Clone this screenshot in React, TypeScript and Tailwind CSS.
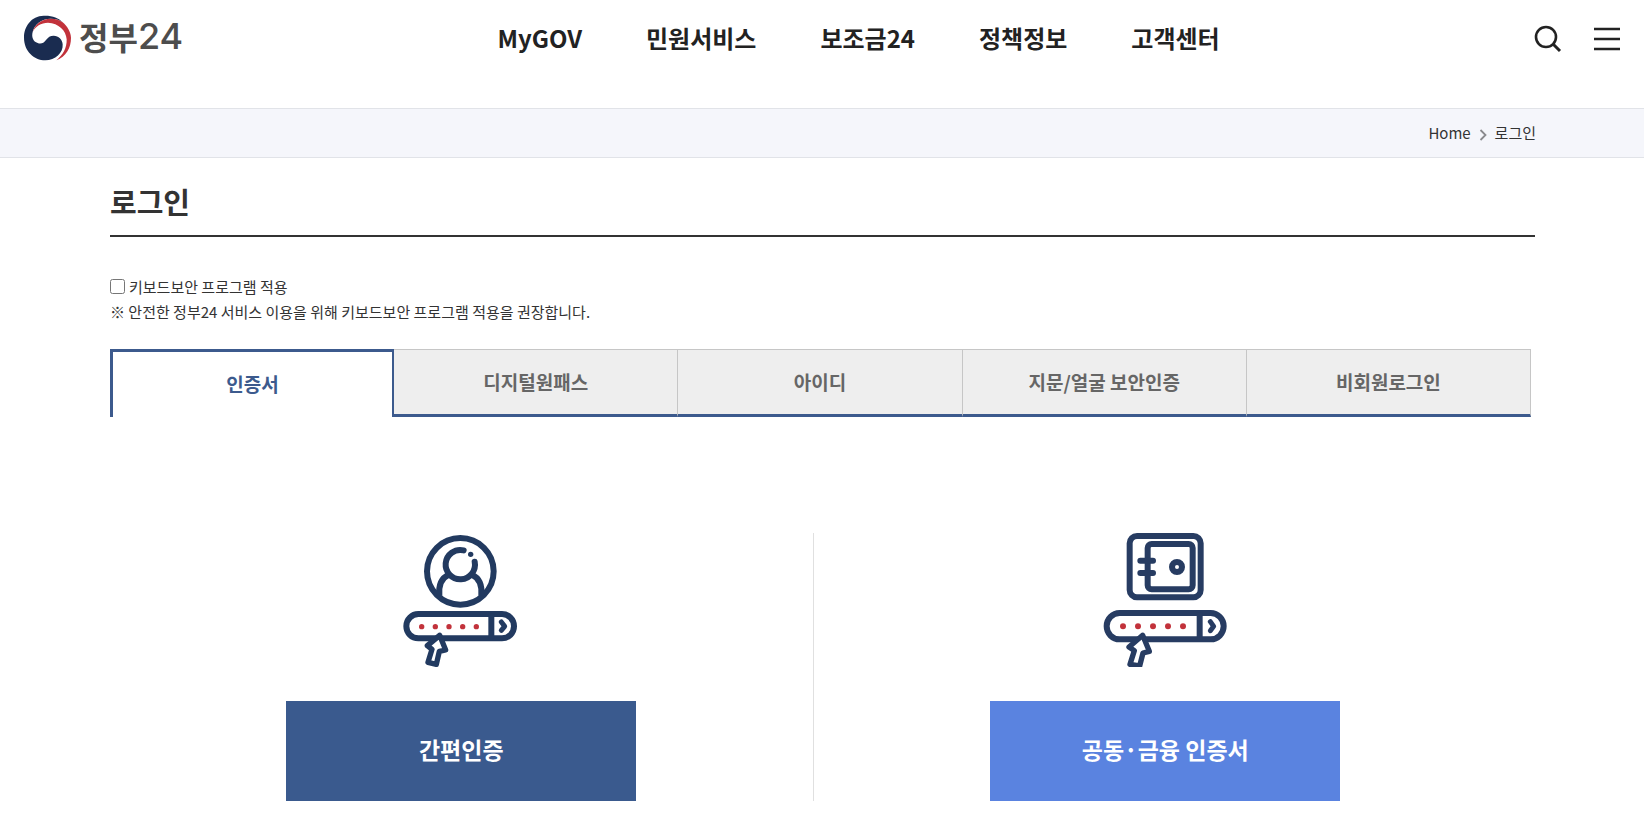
const navItems = ["MyGOV", "민원서비스", "보조금24", "정책정보", "고객센터"]

const tabs = ["인증서", "디지털원패스", "아이디", "지문/얼굴 보안인증", "비회원로그인"]

const Logo = () => {
  return (
    <a href="#" className="flex items-center gap-2 text-[#4d4d4d]">
      <svg viewBox="72 46 141 138" className="h-[46px] w-[47px]">
        <path
          fill="#1a2c50"
          d="M131 48 C94 49 72 80 72 114 C72 154 102 182 136 182 C166 182 190 160 188 134 C187 119 176 108 161 108 C150 108 145 112 138 121 C131 131 122 134 113 130 C99 126 94 112 98 97 C103 74 125 57 152 57 C168 57 180 62 188 68 C176 54 156 47 131 48 Z"
        />
        <path
          fill="#c2323b"
          d="M98 97 C104 74 126 57 152 57 C168 57 180 62 188 68 C202 80 212 96 213 114 C213 145 198 171 169 182 C188 167 201 145 200 119 C198 92 176 71 144 69 C123 69 106 80 98 97 Z"
        />
      </svg>
      <span className="flex items-center pb-1">
        <span className="text-[32px] leading-[42px] font-bold">정부</span>
        <span className="font-['Inter'] text-[36px] leading-[42px] font-medium">24</span>
      </span>
    </a>
  )
}

const Header = () => {
  return (
    <header className="flex h-[108px] items-start justify-between px-6 pt-[15px]">
      <Logo />
      <nav className="flex gap-16 text-2xl leading-[46px] font-bold text-[#222]">
        {navItems.map((item) => (
          <a key={item} href="#">
            {item}
          </a>
        ))}
      </nav>
      <div className="flex h-[48px] items-center gap-8 text-[#222]">
        <button type="button" aria-label="검색">
          <svg viewBox="0 0 28 28" className="size-7" fill="none" stroke="currentColor">
            <circle cx="12" cy="12" r="10" strokeWidth="2.6" />
            <path d="M19 19 L26 26" strokeWidth="3" />
          </svg>
        </button>
        <button type="button" aria-label="전체메뉴">
          <svg viewBox="0 0 26 26" className="size-[26px]" fill="none" stroke="currentColor" strokeWidth="2.6">
            <path d="M0 3 H26 M0 13 H26 M0 23 H26" />
          </svg>
        </button>
      </div>
    </header>
  )
}

const Breadcrumb = () => {
  return (
    <div className="border-y border-[#e1e3e8] bg-[#f5f6fb] px-[108px]">
      <div className="flex h-12 items-center justify-end gap-2 text-[15px] text-[#333]">
        <a href="#">Home</a>
        <svg viewBox="0 0 8 12" className="mt-1 h-3 w-2" fill="none" stroke="#8a8a8e" strokeWidth="1.8">
          <path d="M1.5 1 L6.5 6 L1.5 11" />
        </svg>
        <span>로그인</span>
      </div>
    </div>
  )
}

const PersonIcon = () => {
  return (
    <svg viewBox="3 38 420 402" className="h-[134px] w-[140px]" fill="none" stroke="#223a60" strokeWidth="18">
      <circle cx="211" cy="153" r="100" />
      <path d="M221 90 A44 44 0 1 0 254 124" strokeLinecap="round" />
      <circle cx="242" cy="102" r="8" fill="#223a60" stroke="none" />
      <path d="M148 226 C145 193 156 172 176 163 M274 226 C277 193 266 172 246 163" />
      <rect x="49" y="281" width="323" height="73" rx="36" />
      <path d="M304 280 V355" />
      <path d="M334 305 L344 318 L334 330" strokeWidth="15" strokeLinecap="round" strokeLinejoin="round" />
      <g fill="#c2323b" stroke="none">
        <circle cx="95" cy="319" r="8" />
        <circle cx="136" cy="319" r="8" />
        <circle cx="177" cy="319" r="8" />
        <circle cx="218" cy="319" r="8" />
        <circle cx="259" cy="319" r="8" />
      </g>
      <path
        fill="#fff"
        d="M149 345 L112 376 L126 387 L114 426 L139 432 L148 393 L167 389 Z"
        strokeWidth="16"
        strokeLinejoin="round"
      />
    </svg>
  )
}

const SafeIcon = () => {
  return (
    <svg viewBox="-2 38 450 402" className="h-[134px] w-[150px]" fill="none" stroke="#273c62" strokeWidth="18">
      <rect x="117" y="47" width="213" height="184" rx="22" />
      <rect x="171" y="71" width="135" height="136" rx="12" />
      <path d="M149 121 H187 M149 158 H187" strokeLinecap="round" />
      <circle cx="259" cy="140" r="15" />
      <rect x="48" y="278" width="351" height="79" rx="39" />
      <path d="M327 277 V358" />
      <path d="M359 304 L369 318 L359 331" strokeWidth="15" strokeLinecap="round" strokeLinejoin="round" />
      <g fill="#c2323b" stroke="none">
        <circle cx="97" cy="318" r="9" />
        <circle cx="142" cy="318" r="9" />
        <circle cx="187" cy="318" r="9" />
        <circle cx="232" cy="318" r="9" />
        <circle cx="277" cy="318" r="9" />
      </g>
      <path
        fill="#fff"
        d="M156 345 L115 380 L131 391 L118 432 L147 437 L157 398 L176 393 Z"
        strokeWidth="16"
        strokeLinejoin="round"
      />
    </svg>
  )
}

const Tabs = () => {
  return (
    <div role="tablist" className="mt-[25px] mr-1 grid h-[68px] grid-cols-5 text-[19px] font-bold">
      {tabs.map((tab, i) => (
        <button
          key={tab}
          type="button"
          role="tab"
          aria-selected={i === 0}
          className={
            i === 0
              ? "border-t-3 border-r-2 border-l-3 border-[#3c5a8d] bg-white text-[#3c5a8d]"
              : "border-t border-r border-b-3 border-t-[#c6c6c6] border-r-[#c6c6c6] border-b-[#3c5a8d] bg-[#eee] text-[#666]"
          }
        >
          {tab}
        </button>
      ))}
    </div>
  )
}

export default function App() {
  return (
    <div className="bg-white font-['Noto_Sans_CJK_KR',sans-serif]">
      <Header />
      <Breadcrumb />
      <main className="pr-[109px] pb-[18px] pl-[110px] text-[#333]">
        <h1 className="border-b-2 border-[#333] pt-[21px] pb-3 text-[29px] leading-[44px] font-bold">로그인</h1>
        <div className="mt-[37px] text-[15px] leading-[25px]">
          <div className="flex items-center gap-1">
            <input id="keyboard" type="checkbox" className="size-[15px]" />
            <label htmlFor="keyboard">키보드보안 프로그램 적용</label>
          </div>
          <p>※ 안전한 정부24 서비스 이용을 위해 키보드보안 프로그램 적용을 권장합니다.</p>
        </div>
        <Tabs />
        <div className="mt-[116px] mr-[18px] grid grid-cols-2">
          <section className="flex flex-col items-center gap-[34px] border-r border-[#e0e0e0]">
            <PersonIcon />
            <button type="button" className="h-[100px] w-[350px] bg-[#3a5a8e] pb-1 text-[23px] font-bold text-white">
              간편인증
            </button>
          </section>
          <section className="flex flex-col items-center gap-[34px]">
            <SafeIcon />
            <button type="button" className="h-[100px] w-[350px] bg-[#5a83e0] pb-1 text-[23px] font-bold text-white">
              공동·금융 인증서
            </button>
          </section>
        </div>
      </main>
    </div>
  )
}
